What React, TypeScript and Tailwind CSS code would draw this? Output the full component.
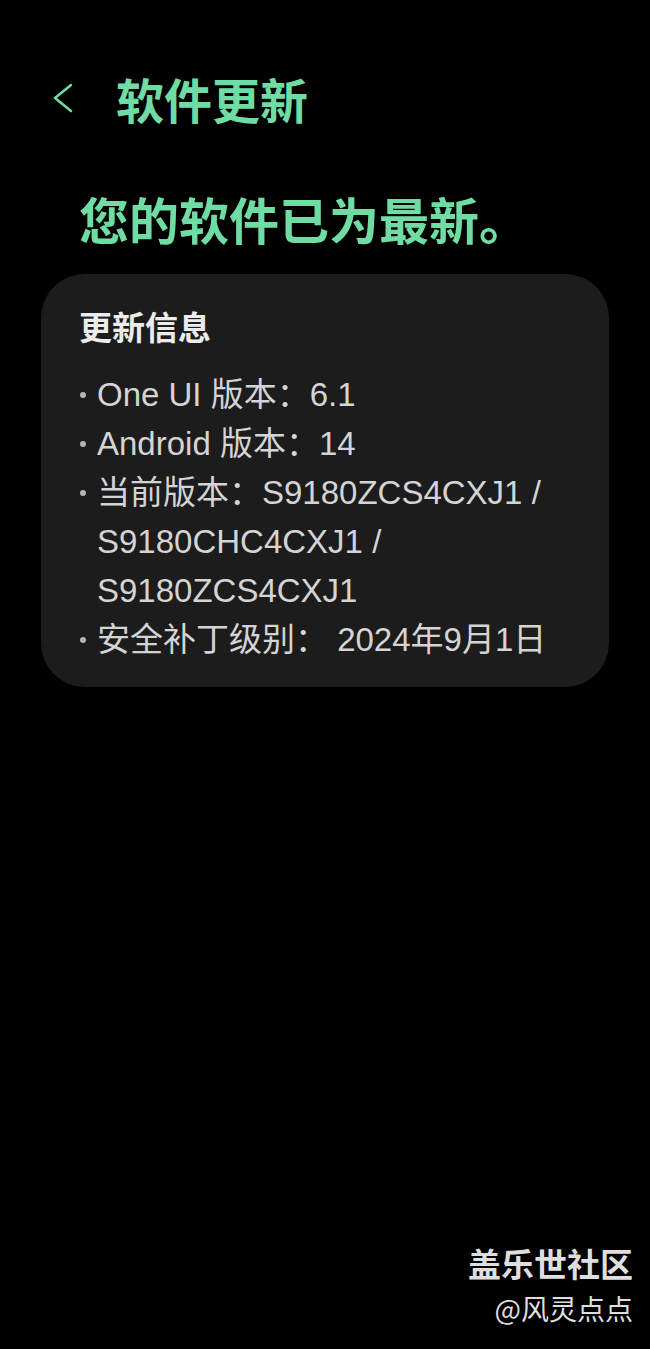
import React from "react";

const font = {
  fontFamily: '"Liberation Sans", "Noto Sans CJK SC", sans-serif',
};

const cjk = { fontFamily: '"Noto Sans CJK SC", sans-serif' };

const items: string[][] = [
  ["One UI 版本：6.1"],
  ["Android 版本：14"],
  ["当前版本：S9180ZCS4CXJ1 /", "S9180CHC4CXJ1 /", "S9180ZCS4CXJ1"],
  ["安全补丁级别： 2024年9月1日"],
];

const App: React.FC = () => {
  return (
    <div
      className="flex min-h-[1349px] w-[650px] flex-col bg-black"
      style={font}
    >
      <header className="flex items-center pl-[52px] pt-[68px]">
        <svg width="22" height="30" viewBox="0 0 22 30" className="mr-[42px]">
          <path
            d="M19 2 L3 15 L19 28"
            fill="none"
            stroke="#6fdca3"
            strokeWidth="2.5"
            strokeLinecap="round"
            strokeLinejoin="round"
          />
        </svg>
        <h1
          className="text-[48px] font-bold leading-[60px] text-[#6fdca3]"
          style={cjk}
        >
          软件更新
        </h1>
      </header>

      <h2
        className="mt-[58px] pl-[79px] text-[50px] font-bold leading-[64px] text-[#6fdca3]"
        style={cjk}
      >
        您的软件已为最新。
      </h2>

      <section className="mx-[41px] mt-[24px] rounded-[44px] bg-[#1c1c1c] pb-[23px] pl-[38px] pr-[20px] pt-[30px]">
        <h3
          className="text-[33px] font-bold leading-[44px] text-[#ececec]"
          style={cjk}
        >
          更新信息
        </h3>
        <ul className="mt-[22px] flex flex-col text-[33px] leading-[49px] text-[#d4d4d4]">
          {items.map((lines, i) => (
            <li key={i} className="flex">
              <span className="flex h-[49px] w-[18px] shrink-0 items-center pl-[1px]">
                <span className="h-[6px] w-[6px] rounded-full bg-[#b4b4b4]" />
              </span>
              <div className="flex flex-col">
                {lines.map((line, j) => (
                  <span key={j} className="whitespace-nowrap">
                    {line}
                  </span>
                ))}
              </div>
            </li>
          ))}
        </ul>
      </section>

      <div className="flex-1" />

      <footer className="flex flex-col items-end pb-[22px] pr-[17px]" style={cjk}>
        <span className="text-[33px] font-bold leading-[44px] text-[#dedede]">
          盖乐世社区
        </span>
        <span className="mt-[4px] text-[28px] leading-[38px] text-[#dedede]">
          @风灵点点
        </span>
      </footer>
    </div>
  );
};

export default App;
